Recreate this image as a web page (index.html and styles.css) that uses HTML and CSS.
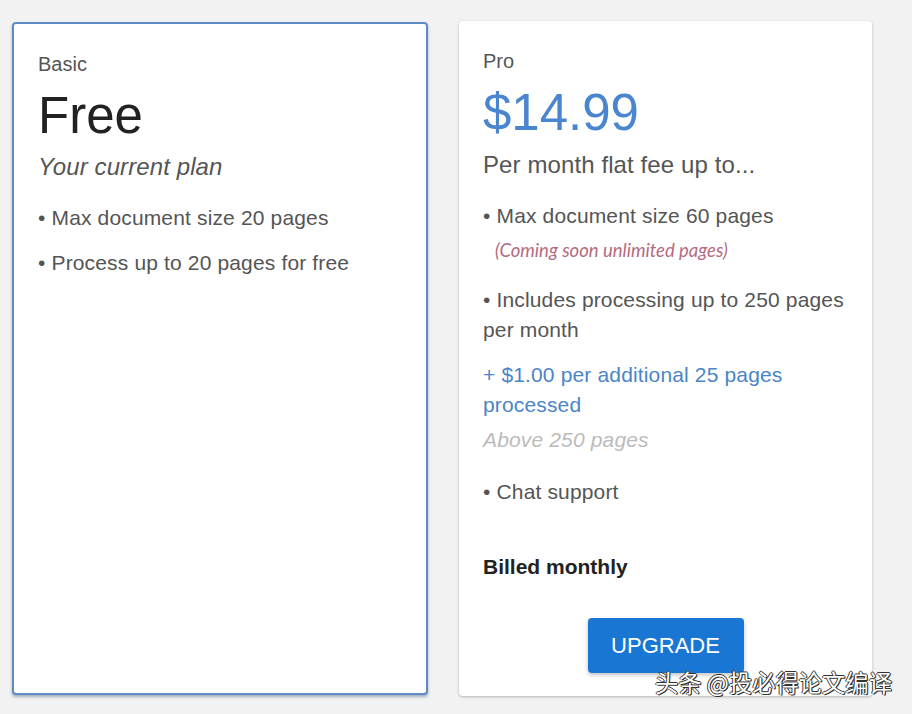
FILE: index.html
```html
<!DOCTYPE html>
<html>
<head>
  <title>Plans</title>
  <link rel="stylesheet" href="styles.css">
</head>
<body>
  <div class="plans">
    <div class="plan-card current">
      <div class="plan-name">Basic</div>
      <div class="plan-price">Free</div>
      <div class="plan-sub current-label">Your current plan</div>
      <div class="feature first">• Max document size 20 pages</div>
      <div class="feature">• Process up to 20 pages for free</div>
    </div>

    <div class="plan-card">
      <div class="plan-name">Pro</div>
      <div class="plan-price blue">$14.99</div>
      <div class="plan-sub">Per month flat fee up to...</div>
      <div class="feature first">• Max document size 60 pages</div>
      <div class="note">(Coming soon unlimited pages)</div>
      <div class="feature">• Includes processing up to 250 pages per month</div>
      <div class="extra">+ $1.00 per additional 25 pages processed</div>
      <div class="extra-note">Above 250 pages</div>
      <div class="feature chat">• Chat support</div>
      <div class="billed">Billed monthly</div>
      <div class="actions">
        <button class="upgrade-btn">UPGRADE</button>
      </div>
    </div>
  </div>
  <div class="watermark">头条 @投必得论文编译</div>
</body>
</html>
```

FILE: styles.css
```css
body {
  margin: 0;
  background-color: #f2f2f2;
  font-family: "Liberation Sans", Arial, sans-serif;
  height: 714px;
  overflow: hidden;
}

.plans {
  display: flex;
  gap: 31px;
  padding: 21px 40px 18px 12px;
  height: 675px;
}

.plan-card {
  flex: 0 0 413px;
  background-color: #ffffff;
  border-radius: 4px;
  padding: 28px 24px 23px 24px;
  box-sizing: border-box;
  box-shadow: 0px 1px 3px rgba(0, 0, 0, 0.25);
  display: flex;
  flex-direction: column;
}

.plan-card.current {
  flex: 0 0 416px;
  border: 2px solid #5f8ac4;
  margin-top: 1px;
  margin-bottom: 1px;
  padding: 28px 22px 22px 24px;
  box-shadow: 0px 2px 3px rgba(60, 90, 130, 0.45);
}

.plan-name {
  font-size: 20px;
  line-height: 24px;
  color: #555555;
}

.plan-price {
  font-size: 51px;
  line-height: 56px;
  color: #222222;
  margin-top: 12px;
}

.plan-price.blue {
  color: #4a85d0;
}

.plan-sub {
  font-size: 24px;
  line-height: 30px;
  color: #555555;
  margin-top: 9px;
  letter-spacing: 0.1px;
}

.current-label {
  font-style: italic;
  margin-top: 8px;
}

.feature {
  font-size: 21px;
  line-height: 30px;
  color: #555555;
  margin-top: 15px;
  letter-spacing: 0.15px;
}

.feature.first {
  margin-top: 21px;
}

.note {
  font-family: Lato, "DejaVu Sans", sans-serif;
  font-style: italic;
  font-size: 18.5px;
  line-height: 24px;
  color: #b56b80;
  margin-top: 7px;
  margin-bottom: 8px;
  padding-left: 12px;
}

.extra {
  font-size: 21px;
  line-height: 30px;
  color: #4a85c6;
  margin-top: 15px;
  letter-spacing: 0.15px;
}

.extra-note {
  font-size: 21px;
  line-height: 30px;
  font-style: italic;
  color: #bbbbbb;
  margin-top: 5px;
  letter-spacing: 0.15px;
}

.feature.chat {
  margin-top: 22px;
}

.billed {
  font-size: 21px;
  line-height: 30px;
  font-weight: bold;
  color: #222222;
  margin-top: 45px;
}

.actions {
  display: flex;
  justify-content: center;
  margin-top: 36px;
}

.upgrade-btn {
  background-color: #1976d2;
  color: #ffffff;
  border: none;
  border-radius: 4px;
  width: 156px;
  height: 55px;
  font-family: "Liberation Sans", Arial, sans-serif;
  font-size: 22px;
  cursor: pointer;
  box-shadow: 0px 2px 4px rgba(0, 0, 0, 0.25);
}

.watermark {
  position: absolute;
  left: 655px;
  top: 667px;
  font-family: "Noto Sans CJK SC", sans-serif;
  font-size: 23.3px;
  line-height: 30px;
  color: #ffffff;
  text-shadow: 1px 1px 0 #333, -1px 0 0 #333, 0 -1px 0 #333, 1px 0 0 #333;
}
```
